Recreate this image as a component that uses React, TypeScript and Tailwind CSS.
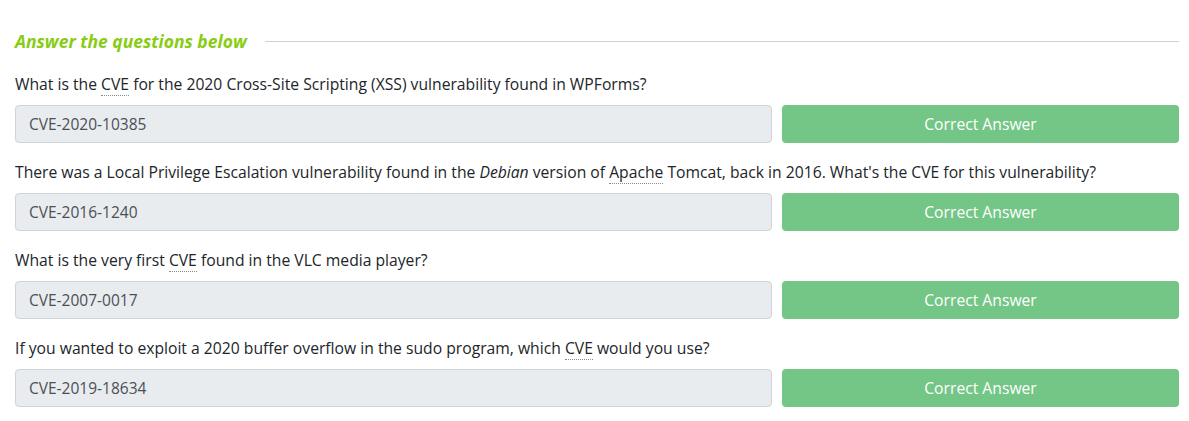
const questions = [
  {
    id: 1,
    text: (
      <>
        What is the <Abbr>CVE</Abbr> for the 2020 Cross-Site Scripting (XSS) vulnerability found in WPForms?
      </>
    ),
    answer: 'CVE-2020-10385',
  },
  {
    id: 2,
    text: (
      <>
        There was a Local Privilege Escalation vulnerability found in the <em>Debian</em> version of{' '}
        <Abbr>Apache</Abbr> Tomcat, back in 2016. What's the CVE for this vulnerability?
      </>
    ),
    answer: 'CVE-2016-1240',
  },
  {
    id: 3,
    text: (
      <>
        What is the very first <Abbr>CVE</Abbr> found in the VLC media player?
      </>
    ),
    answer: 'CVE-2007-0017',
  },
  {
    id: 4,
    text: (
      <>
        If you wanted to exploit a 2020 buffer overflow in the sudo program, which <Abbr>CVE</Abbr> would you use?
      </>
    ),
    answer: 'CVE-2019-18634',
  },
];

function Abbr({ children }: { children: React.ReactNode }) {
  return (
    <abbr className="no-underline border-b border-dotted border-[#8a8a8a] cursor-help">{children}</abbr>
  );
}

function QuestionRow({ text, answer }: { text: React.ReactNode; answer: string }) {
  return (
    <div className="mb-[17px]">
      <p className="h-6 leading-6 text-[15.7px] text-[#212529]">{text}</p>
      <div className="mt-[9px] flex gap-[10px]">
        <input
          disabled
          value={answer}
          readOnly
          className="h-[38px] flex-1 rounded border border-[#ced4da] bg-[#e9ecef] pl-[13px] pr-3 text-[15.5px] text-[#495057]"
        />
        <button className="h-[38px] w-[397px] rounded bg-[#73c686] pt-px text-[15.7px] text-white">
          Correct Answer
        </button>
      </div>
    </div>
  );
}

export default function App() {
  return (
    <div
      className="min-h-[421px] bg-white pl-[15px] pr-[10px] pt-[29px]"
      style={{ fontFamily: '"Open Sans", "Noto Sans", sans-serif' }}
    >
      {/* Section heading */}
      <div className="flex h-6 items-center gap-[18px]">
        <h5 className="whitespace-nowrap text-[17.5px] font-bold italic text-[#88cc14]">
          Answer the questions below
        </h5>
        <div className="h-px flex-1 bg-[#d1d1d1]" />
      </div>

      <div className="mt-[19px]">
        {questions.map((q) => (
          <QuestionRow key={q.id} text={q.text} answer={q.answer} />
        ))}
      </div>
    </div>
  );
}
